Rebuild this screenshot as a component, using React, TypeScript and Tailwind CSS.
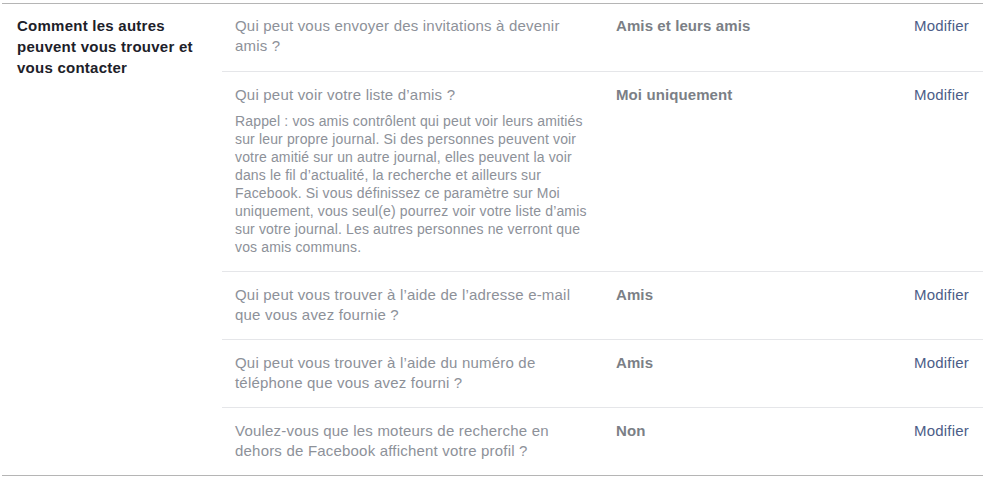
const rows = [
  {
    question: 'Qui peut vous envoyer des invitations à devenir amis ?',
    value: 'Amis et leurs amis',
  },
  {
    question: 'Qui peut voir votre liste d’amis ?',
    note:
      'Rappel : vos amis contrôlent qui peut voir leurs amitiés sur leur propre journal. Si des personnes peuvent voir votre amitié sur un autre journal, elles peuvent la voir dans le fil d’actualité, la recherche et ailleurs sur Facebook. Si vous définissez ce paramètre sur Moi uniquement, vous seul(e) pourrez voir votre liste d’amis sur votre journal. Les autres personnes ne verront que vos amis communs.',
    value: 'Moi uniquement',
  },
  {
    question: 'Qui peut vous trouver à l’aide de l’adresse e-mail que vous avez fournie ?',
    value: 'Amis',
  },
  {
    question: 'Qui peut vous trouver à l’aide du numéro de téléphone que vous avez fourni ?',
    value: 'Amis',
  },
  {
    question: 'Voulez-vous que les moteurs de recherche en dehors de Facebook affichent votre profil ?',
    value: 'Non',
  },
]

const App = () => {
  return (
    <div className="w-[994px] h-[482px] bg-white pt-[3px] font-['Liberation_Sans',Arial,sans-serif]">
      <div className="ml-[2px] w-[981px] border-t border-b border-[#b5b5b5] flex">
        {/* Section title */}
        <div className="w-[220px] pl-[15px] pr-[20px] pt-[11px] text-[15px] leading-[21px] tracking-[0.25px] font-bold text-[#1d2129]">
          Comment les autres peuvent vous trouver et vous contacter
        </div>

        {/* Settings rows */}
        <div className="flex-1">
          {rows.map((row, i) => (
            <div
              key={i}
              className={
                i === 0
                  ? 'flex pl-[13px] pr-[14px] pt-[12px] pb-[15px]'
                  : 'flex pl-[13px] pr-[14px] pt-[13px] pb-[14px] border-t border-[#e5e6e9]'
              }
            >
              <div className="w-[381px] pr-[26px]">
                <div className="text-[15px] leading-[20px] tracking-[0.2px] text-[#8d9199]">{row.question}</div>
                {row.note && (
                  <div className="mt-[7px] mb-px text-[14px] leading-[18px] tracking-[0.15px] text-[#8d9199]">
                    {row.note}
                  </div>
                )}
              </div>
              <div className="flex-1 text-[15px] leading-[20px] tracking-[0.1px] font-bold text-[#7b7f86]">
                {row.value}
              </div>
              <a href="#" className="text-[15px] leading-[20px] tracking-[0.2px] text-[#4c5d88]">
                Modifier
              </a>
            </div>
          ))}
        </div>
      </div>
    </div>
  )
}

export default App
